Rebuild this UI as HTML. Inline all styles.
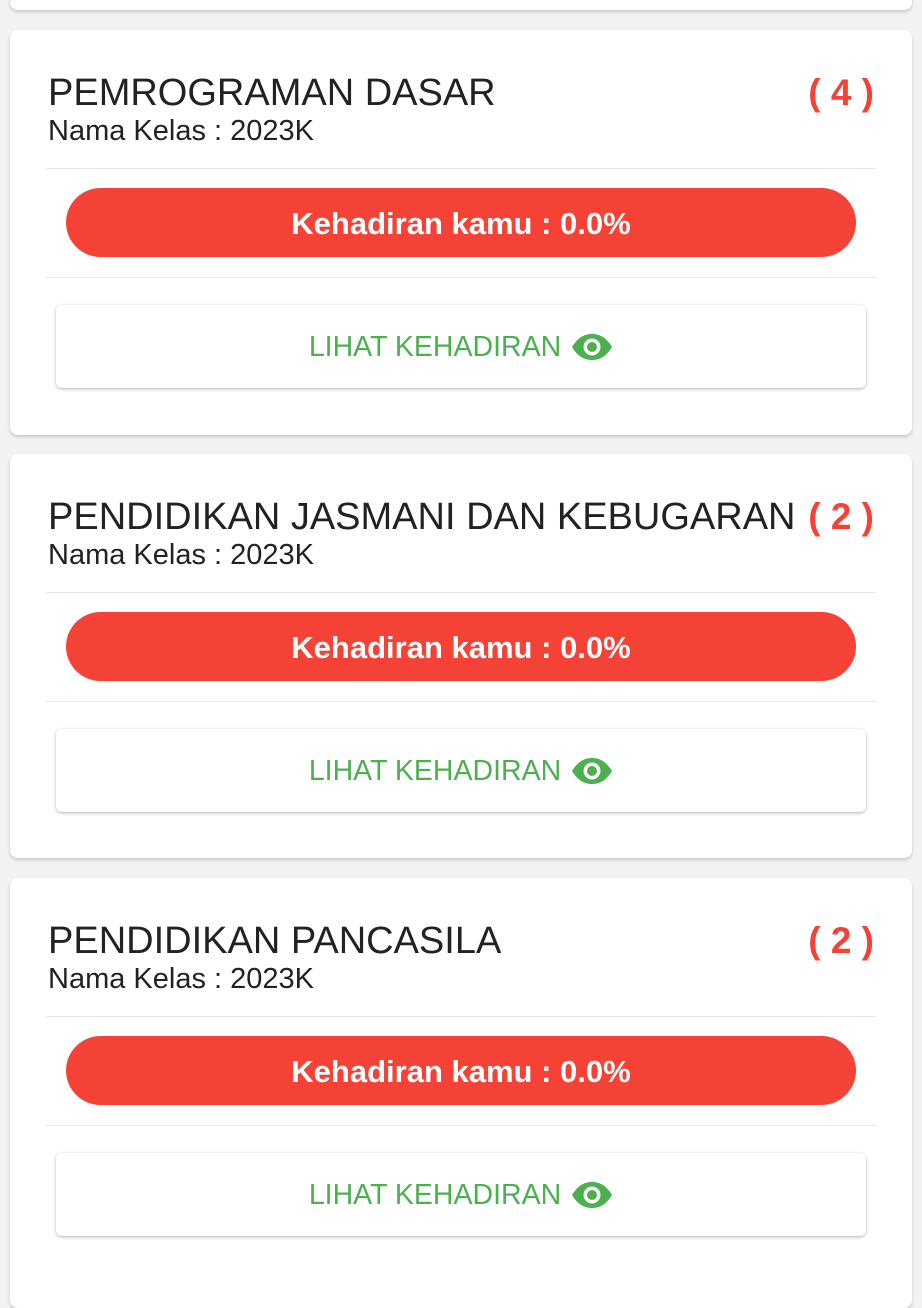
<!DOCTYPE html>
<html><head><style>
body{margin:0;width:922px;height:1280px;background:#f2f2f2;font-family:"Liberation Sans",sans-serif;overflow:hidden;position:relative}
.card{position:absolute;left:10px;width:902px;background:#fff;border-radius:8px;box-shadow:0 2px 3px rgba(0,0,0,.18)}
.t{position:absolute;left:38px;top:42px;font-size:38px;color:#222;letter-spacing:0px;white-space:nowrap}
.c{position:absolute;right:38px;top:42px;font-size:37px;color:#f44336;font-weight:bold;letter-spacing:0px}
.s{position:absolute;left:38px;top:85px;font-size:29px;color:#222}
.hr{position:absolute;left:36px;right:36px;height:1px;background:#e6e6e6}
.bar{position:absolute;left:56px;width:790px;top:158px;height:69px;border-radius:35px;background:#f44336;color:#fff;font-weight:bold;font-size:31px;text-align:center;line-height:71px}
.btn{position:absolute;left:46px;width:810px;top:275px;height:83px;border-radius:6px;background:#fff;box-shadow:0 1px 3px rgba(0,0,0,.3);color:#4caf50;font-size:28.5px;text-align:center;line-height:85px}
.btn svg{vertical-align:-5px;margin-left:10px}
</style></head><body>
<div class="card" style="top:-20px;height:30px"></div>

<div class="card" style="top:30px;height:405px">
<div class="t">PEMROGRAMAN DASAR</div><div class="c">( 4 )</div>
<div class="s">Nama Kelas : 2023K</div>
<div class="hr" style="top:138px"></div>
<div class="bar">Kehadiran kamu : 0.0%</div>
<div class="hr" style="top:247px"></div>
<div class="btn">LIHAT KEHADIRAN<svg width="42" height="28" viewBox="0 0 42 28"><path d="M1 14C7 4 14 1 21 1S35 4 41 14C35 24 28 27 21 27S7 24 1 14Z" fill="#4caf50"/><circle cx="21" cy="14" r="8.5" fill="#fff"/><circle cx="21" cy="14" r="5" fill="#4caf50"/></svg></div>
</div>

<div class="card" style="top:454px;height:404px">
<div class="t">PENDIDIKAN JASMANI DAN KEBUGARAN</div><div class="c">( 2 )</div>
<div class="s">Nama Kelas : 2023K</div>
<div class="hr" style="top:138px"></div>
<div class="bar">Kehadiran kamu : 0.0%</div>
<div class="hr" style="top:247px"></div>
<div class="btn">LIHAT KEHADIRAN<svg width="42" height="28" viewBox="0 0 42 28"><path d="M1 14C7 4 14 1 21 1S35 4 41 14C35 24 28 27 21 27S7 24 1 14Z" fill="#4caf50"/><circle cx="21" cy="14" r="8.5" fill="#fff"/><circle cx="21" cy="14" r="5" fill="#4caf50"/></svg></div>
</div>

<div class="card" style="top:878px;height:430px">
<div class="t">PENDIDIKAN PANCASILA</div><div class="c">( 2 )</div>
<div class="s">Nama Kelas : 2023K</div>
<div class="hr" style="top:138px"></div>
<div class="bar">Kehadiran kamu : 0.0%</div>
<div class="hr" style="top:247px"></div>
<div class="btn">LIHAT KEHADIRAN<svg width="42" height="28" viewBox="0 0 42 28"><path d="M1 14C7 4 14 1 21 1S35 4 41 14C35 24 28 27 21 27S7 24 1 14Z" fill="#4caf50"/><circle cx="21" cy="14" r="8.5" fill="#fff"/><circle cx="21" cy="14" r="5" fill="#4caf50"/></svg></div>
</div>
</body></html>
